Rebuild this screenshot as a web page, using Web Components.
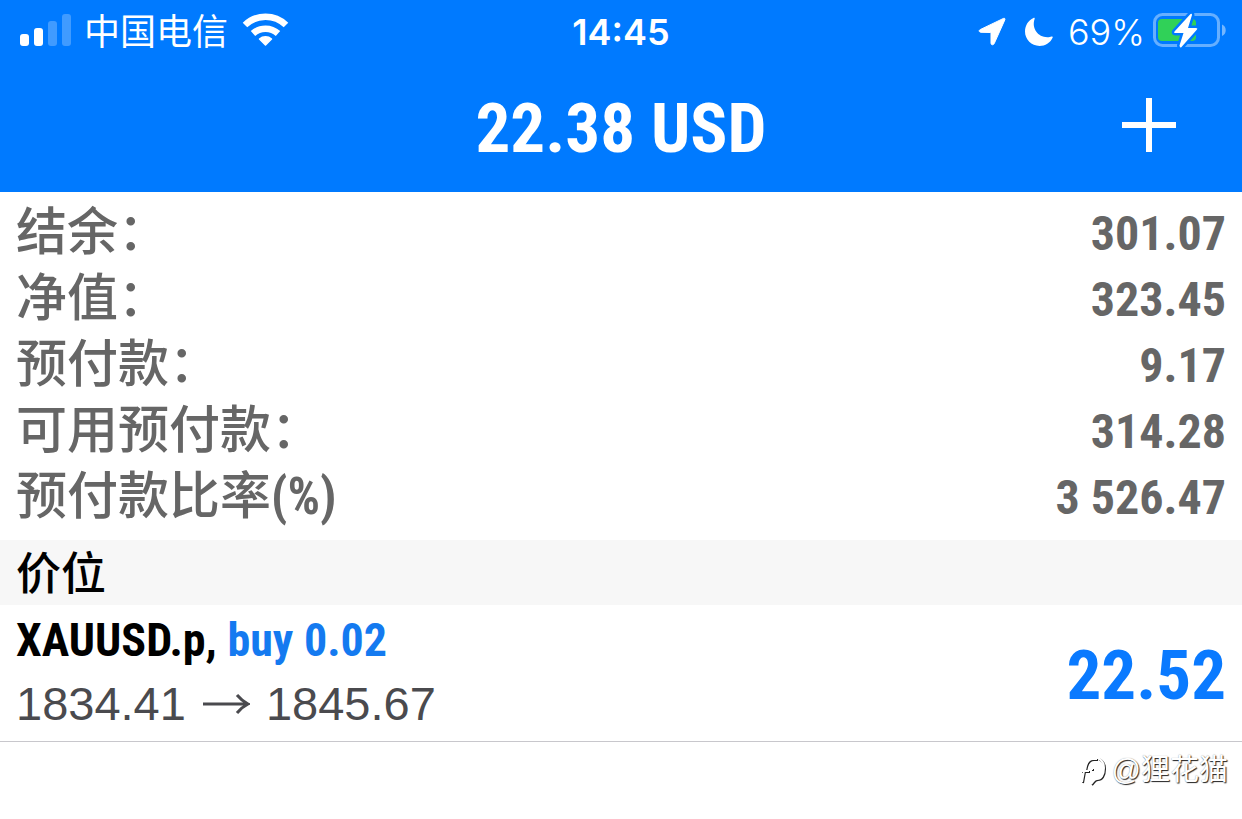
<!DOCTYPE html>
<html lang="zh-CN">
<head>
<meta charset="utf-8">
<meta name="viewport" content="width=device-width, initial-scale=1">
<title>22.38 USD</title>
<style>
    :root {
        --blue: #007aff;
        --grey: #666;
        --narrow: "Roboto Condensed", "Liberation Sans", "Noto Sans CJK SC", sans-serif;
        --wide: "Liberation Sans", "Noto Sans CJK SC", sans-serif;
        --system: Inter, "Noto Sans CJK SC", sans-serif;
    }
    body {
        margin: 0;
        background: #fff;
        font-family: var(--wide);
    }
</style>
</head>
<body>
<trade-app>
    <status-bar carrier="中国电信" time="14:45" battery="69"></status-bar>
    <title-bar>22.38 USD</title-bar>
    <account-summary>
        <summary-row label="结余：">301.07</summary-row>
        <summary-row label="净值：">323.45</summary-row>
        <summary-row label="预付款：">9.17</summary-row>
        <summary-row label="可用预付款：">314.28</summary-row>
        <summary-row label="预付款比率" unit="(%)">3 526.47</summary-row>
    </account-summary>
    <section-header>价位</section-header>
    <position-row symbol="XAUUSD.p" side="buy 0.02" open="1834.41" current="1845.67">22.52</position-row>
    <user-mark>@狸花猫</user-mark>
</trade-app>

<script>
class BaseElement extends HTMLElement {
    constructor() {
        super();
        this.attachShadow({ mode: 'open' });
    }

    connectedCallback() {
        this.shadowRoot.innerHTML = this.render();
    }
}

class TradeApp extends BaseElement {
    render() {
        return `
            <style>
                :host {
                    display: flex;
                    flex-direction: column;
                    min-height: 100vh;
                }
            </style>
            <slot></slot>
        `;
    }
}

class StatusBar extends BaseElement {
    render() {
        return `
            <style>
                :host {
                    display: grid;
                    grid-template-columns: 1fr auto 1fr;
                    align-items: center;
                    height: 64px;
                    padding: 0 16px;
                    background: var(--blue);
                    color: #fff;
                    font: 400 36px/64px var(--system);
                }
                .side {
                    display: flex;
                    align-items: center;
                }
                .left {
                    padding-left: 4px;
                }
                .right {
                    justify-content: flex-end;
                }
                .carrier {
                    margin: 0 15px 0 12px;
                }
                .time {
                    font-weight: 600;
                }
                .level {
                    font-weight: 300;
                }
                .arrow {
                    margin-right: 18px;
                }
                .moon {
                    margin-right: 14px;
                }
                .battery {
                    margin-left: 8px;
                }
                svg {
                    display: block;
                    flex: none;
                    overflow: visible;
                }
            </style>
            <div class="side left">
                <svg width="52" height="34" viewBox="0 0 52 34" fill="#fff">
                    <rect x="0" y="19" width="9" height="12" rx="3"/>
                    <rect x="14" y="13" width="9" height="18" rx="3"/>
                    <rect x="28" y="6" width="9" height="25" rx="3" opacity=".25"/>
                    <rect x="42" y="-1" width="9" height="32" rx="3" opacity=".25"/>
                </svg>
                <span class="carrier">${this.getAttribute('carrier')}</span>
                <svg width="45" height="34" viewBox="0 0 45 34" fill="none" stroke="#fff" stroke-width="6.500">
                    <path d="M2 10a29.500 29.500 0 0 1 41 0"/>
                    <path d="M10 18.500a18.500 18.500 0 0 1 25 0"/>
                    <path d="M22.500 30l-6-6a9 9 0 0 1 12 0z" fill="#fff" stroke-width="1.500" stroke-linejoin="round"/>
                </svg>
            </div>
            <span class="time">${this.getAttribute('time')}</span>
            <div class="side right">
                <svg class="arrow" width="28" height="28" viewBox="0 0 28 28" fill="#fff">
                    <path d="M25.500 .4 2.400 11.500C.5 12.400 1 14 2.800 14.300L12 14.500Q13 14.500 13 15.500V25.200C13 27 15.400 27.400 16.200 25.600L26.800 1.900C27.300 .7 26.600 0 25.500 .4z" stroke="#fff"/>
                </svg>
                <svg class="moon" width="30" height="30" viewBox="0 0 30 30" fill="#fff">
                    <path d="M9.500 1C10.300 .6 11 1.200 10.600 2.100C7.400 11.500 14 20.400 23.500 20.300C25.300 20.200 26.400 19.900 27.500 19.500C28.500 19.200 29 19.900 28.600 20.800C26.300 25.900 21.200 29 15.500 29C7.500 29 1 22.500 1 14.600C1 8.500 4.300 3.300 9.500 1z"/>
                </svg>
                <span class="level">${this.getAttribute('battery')}%</span>
                <svg class="battery" width="73" height="38" viewBox="0 0 73 38">
                    <rect x="1.500" y="1.500" width="64" height="31" rx="8" fill="none" stroke="#fff" stroke-opacity=".4" stroke-width="3"/>
                    <path d="M69 11.500c5 2 5 9.500 0 11.500z" fill="#fff" fill-opacity=".45"/>
                    <rect x="5" y="6" width="38" height="22" rx="4" fill="#30d158"/>
                    <path d="M37.500 1 21.500 18.500Q20.500 20 22.500 20H30.500L26.500 32.500Q27 35.500 28.500 34L44 16.500Q45 15 43 15H35L39 2Q39 0 37.500 1z" fill="#fff" stroke="#007aff" stroke-width="5" paint-order="stroke"/>
                </svg>
            </div>
        `;
    }
}

class TitleBar extends BaseElement {
    render() {
        return `
            <style>
                :host {
                    display: grid;
                    grid-template-columns: 1fr auto 1fr;
                    align-items: center;
                    padding: 0 64px 6px;
                    background: var(--blue);
                    color: #fff;
                }
                h1 {
                    grid-column: 2;
                    margin: 0;
                    padding-top: 8px;
                    font: 700 69px/114px var(--narrow);
                }
                button {
                    justify-self: end;
                    padding: 0;
                    border: 0;
                    background: none;
                    color: inherit;
                    cursor: pointer;
                }
                svg {
                    display: block;
                }
            </style>
            <h1><slot></slot></h1>
            <button type="button" aria-label="新订单">
                <svg width="58" height="58" viewBox="0 0 58 58" stroke="currentColor" stroke-width="6">
                    <path d="M2 29h54M29 2v54"/>
                </svg>
            </button>
        `;
    }
}

class AccountSummary extends BaseElement {
    render() {
        return `
            <style>
                :host {
                    display: flex;
                    flex-direction: column;
                    padding: 8px 16px 10px;
                }
            </style>
            <slot></slot>
        `;
    }
}

class SummaryRow extends BaseElement {
    render() {
        return `
            <style>
                :host {
                    display: flex;
                    align-items: baseline;
                    justify-content: space-between;
                    height: 66px;
                    color: var(--grey);
                    font: 700 48px/66px var(--narrow);
                }
                .label {
                    font-size: 51px;
                    font-weight: 500;
                }
                .unit {
                    font-weight: 700;
                }
            </style>
            <span class="label">${this.getAttribute('label')}<span class="unit">${this.getAttribute('unit') || ''}</span></span>
            <span><slot></slot></span>
        `;
    }
}

class SectionHeader extends BaseElement {
    render() {
        return `
            <style>
                :host {
                    display: block;
                    padding: 0 16px;
                    background: #f7f7f7;
                    color: #000;
                }
                h2 {
                    margin: 0;
                    padding-top: 5px;
                    font: 500 45px/60px var(--wide);
                }
            </style>
            <h2><slot></slot></h2>
        `;
    }
}

class PositionRow extends BaseElement {
    render() {
        return `
            <style>
                :host {
                    display: flex;
                    align-items: center;
                    justify-content: space-between;
                    padding: 4px 16px 6px;
                    border-bottom: 1px solid #c8c7cc;
                }
                .deal {
                    color: #000;
                    font: 700 46px/63px var(--narrow);
                }
                .side {
                    color: #147af0;
                }
                .prices {
                    display: flex;
                    align-items: center;
                    gap: 16px;
                    color: #4a4a4e;
                    font: 400 47px/63px var(--wide);
                }
                .profit {
                    padding-top: 8px;
                    color: #0a7aff;
                    font: 700 69px/84px var(--narrow);
                }
            </style>
            <div>
                <div class="deal">${this.getAttribute('symbol')}, <span class="side">${this.getAttribute('side')}</span></div>
                <div class="prices">
                    <span>${this.getAttribute('open')}</span>
                    <svg width="48" height="24" viewBox="0 0 48 24" fill="none" stroke="currentColor" stroke-width="3">
                        <path d="M1 12h44M35 3q5 6 11 9q-6 3-11 9"/>
                    </svg>
                    <span>${this.getAttribute('current')}</span>
                </div>
            </div>
            <span class="profit"><slot></slot></span>
        `;
    }
}

class UserMark extends BaseElement {
    render() {
        return `
            <style>
                :host {
                    display: flex;
                    align-items: center;
                    justify-content: flex-end;
                    gap: 6px;
                    padding: 8px 14px;
                    color: #fff;
                    font: 400 29px/40px var(--wide);
                    text-shadow: 1px 1px 1px #222, 0 0 1px #999;
                }
                svg {
                    filter: drop-shadow(1px 1px 0 #222);
                }
            </style>
            <svg width="26" height="30" viewBox="0 0 26 30" fill="none" stroke="#fff" stroke-width="2">
                <path d="M2 27 4 16H1M4 16h5M5 16C6 8 8 4 13 4h4M11 14h2M18 3c4 2 6 6 6 10 0 7-3 11-7 11-3 0-3 2-6 5"/>
            </svg>
            <span><slot></slot></span>
        `;
    }
}

customElements.define('trade-app', TradeApp);
customElements.define('status-bar', StatusBar);
customElements.define('title-bar', TitleBar);
customElements.define('account-summary', AccountSummary);
customElements.define('summary-row', SummaryRow);
customElements.define('section-header', SectionHeader);
customElements.define('position-row', PositionRow);
customElements.define('user-mark', UserMark);
</script>
</body>
</html>
